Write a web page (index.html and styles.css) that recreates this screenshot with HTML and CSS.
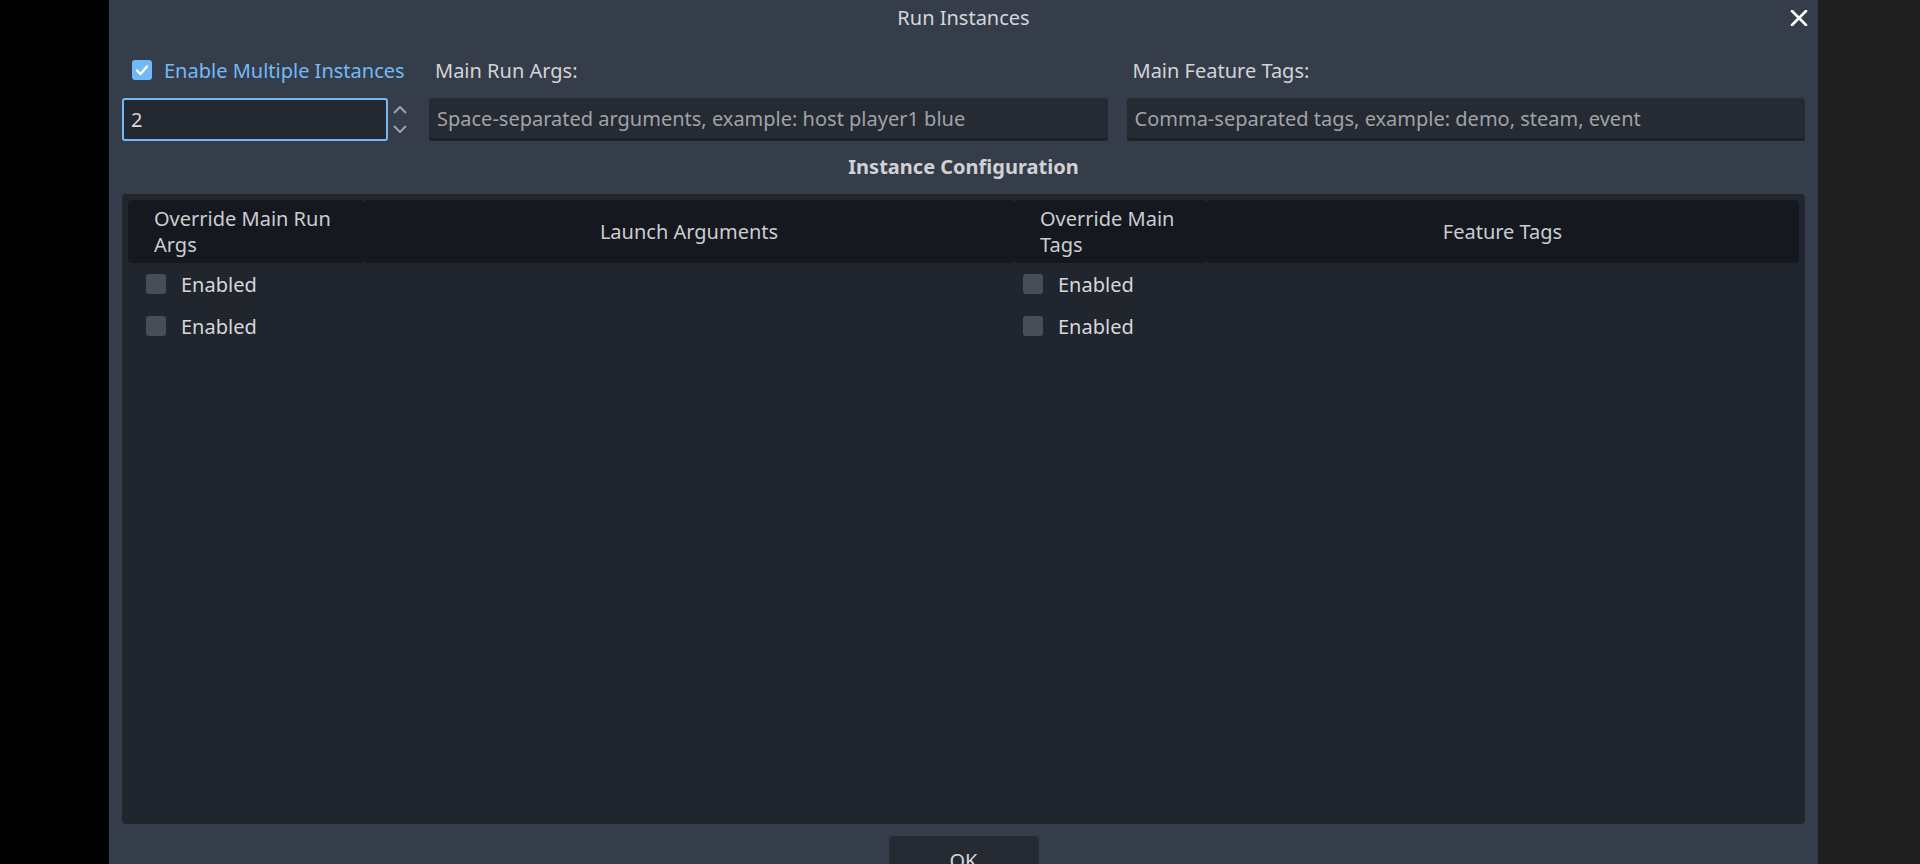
FILE: index.html
```html
<!DOCTYPE html>
<html lang="en">
<head>
  <meta charset="UTF-8" />
  <title>Run Instances</title>
  <link rel="stylesheet" href="styles.css">
</head>
<body>
  <div class="side-left"></div>

  <div class="dialog">
    <div class="titlebar">
      <span class="title">Run Instances</span>
      <span class="close">
        <svg width="18" height="16" viewBox="0 0 18 16"><path d="M2 1 L16 15 M16 1 L2 15" stroke="#fff" stroke-width="2.6" stroke-linecap="round"/></svg>
      </span>
    </div>

    <div class="content">
      <div class="top-grid">
        <label class="check-label">
          <span class="box checked">
            <svg width="14" height="12" viewBox="0 0 14 12"><path d="M2 6.5 L5.5 10 L12 2.5" fill="none" stroke="#fff" stroke-width="2.4" stroke-linecap="round" stroke-linejoin="round"/></svg>
          </span>
          Enable Multiple Instances
        </label>
        <div class="field-label">Main Run Args:</div>
        <div class="field-label">Main Feature Tags:</div>

        <div class="spinbox">
          <div class="spin-field">2</div>
          <div class="spin-arrows">
            <svg width="14" height="9" viewBox="0 0 14 9"><path d="M1.5 7.5 L7 2 L12.5 7.5" fill="none" stroke="#a3a6ac" stroke-width="1.8" stroke-linecap="round" stroke-linejoin="round"/></svg>
            <svg width="14" height="9" viewBox="0 0 14 9"><path d="M1.5 1.5 L7 7 L12.5 1.5" fill="none" stroke="#a3a6ac" stroke-width="1.8" stroke-linecap="round" stroke-linejoin="round"/></svg>
          </div>
        </div>
        <div class="line-edit">Space-separated arguments, example: host player1 blue</div>
        <div class="line-edit">Comma-separated tags, example: demo, steam, event</div>
      </div>

      <h2 class="section">Instance Configuration</h2>

      <div class="panel">
        <div class="tree-head">
          <div class="head-cell wrap first">Override Main Run Args</div>
          <div class="head-cell">Launch Arguments</div>
          <div class="head-cell wrap third">Override Main Tags</div>
          <div class="head-cell">Feature Tags</div>
        </div>

        <div class="tree-row">
          <div class="cell first"><span class="box"></span>Enabled</div>
          <div class="cell"></div>
          <div class="cell third"><span class="box"></span>Enabled</div>
          <div class="cell"></div>
        </div>
        <div class="tree-row">
          <div class="cell first"><span class="box"></span>Enabled</div>
          <div class="cell"></div>
          <div class="cell third"><span class="box"></span>Enabled</div>
          <div class="cell"></div>
        </div>
      </div>

      <div class="buttons">
        <button class="ok-btn">OK</button>
      </div>
    </div>
  </div>

  <div class="side-right"></div>
</body>
</html>
```

FILE: styles.css
```css
* {
  box-sizing: border-box;
}

body {
  margin: 0;
  height: 864px;
  overflow: hidden;
  display: flex;
  background: #000;
  font-family: 'Noto Sans', sans-serif;
  font-size: 20px;
  color: #d6d8db;
}

.side-left {
  width: 109px;
  background: #000;
}

.side-right {
  flex: 1;
  background: #1f1f1f;
}

.dialog {
  width: 1709px;
  background: #363d4a;
  display: flex;
  flex-direction: column;
}

.titlebar {
  position: relative;
  height: 35px;
  display: flex;
  align-items: center;
  justify-content: center;
}

.title {
  color: #d4d6d9;
  line-height: 35px;
}

.close {
  position: absolute;
  top: 10px;
  right: 10px;
  display: flex;
}

.content {
  padding: 21px 13px 0;
}

.top-grid {
  display: grid;
  grid-template-columns: 288px 1fr 1fr;
  grid-template-rows: 28px 43px;
  column-gap: 19px;
  row-gap: 14px;
}

.check-label {
  display: flex;
  align-items: center;
  gap: 12px;
  padding-left: 10px;
  color: #72baf7;
  white-space: nowrap;
}

.box {
  width: 20px;
  height: 20px;
  border-radius: 3px;
  background: #484d57;
  display: inline-flex;
  align-items: center;
  justify-content: center;
  flex-shrink: 0;
}

.box.checked {
  background: #70b9f6;
}

.field-label {
  display: flex;
  align-items: center;
  padding-left: 6px;
  color: #d2d4d7;
}

.spinbox {
  display: flex;
}

.spin-field {
  width: 266px;
  border: 2px solid #70b9f6;
  border-radius: 3px;
  background: #242931;
  padding-left: 7px;
  display: flex;
  align-items: center;
  color: #d6d8db;
}

.spin-arrows {
  flex: 1;
  display: flex;
  flex-direction: column;
  align-items: center;
  justify-content: center;
  gap: 11px;
  padding-left: 2px;
}

.line-edit {
  background: #252a33;
  border-radius: 3px;
  box-shadow: inset 0 -3px 0 #1e2229;
  padding: 0 8px 3px;
  display: flex;
  align-items: center;
  color: #a0a3a8;
  white-space: nowrap;
  overflow: hidden;
}

.section {
  margin: 12px 0 13px;
  line-height: 28px;
  font-size: 20px;
  font-weight: bold;
  text-align: center;
  color: #d0d2d5;
}

.panel {
  height: 630px;
  background: #21252d;
  border-radius: 4px;
  padding: 6px;
}

.tree-head,
.tree-row {
  display: grid;
  grid-template-columns: 236px 650px 192px 1fr;
}

.tree-head {
  height: 63px;
}

.head-cell {
  background: #15181f;
  border-radius: 4px;
  display: flex;
  align-items: center;
  justify-content: center;
  color: #cbcdd0;
  line-height: 26px;
}

.head-cell.wrap {
  justify-content: flex-start;
  padding-top: 1px;
}

.head-cell.first {
  padding-left: 26px;
  padding-right: 24px;
}

.head-cell.third {
  padding-left: 26px;
  padding-right: 24px;
}

.tree-row {
  height: 42px;
}

.cell {
  display: flex;
  align-items: center;
  gap: 15px;
  color: #d6d8db;
}

.cell.first {
  padding-left: 18px;
}

.cell.third {
  padding-left: 9px;
}

.buttons {
  display: flex;
  justify-content: center;
  margin-top: 12px;
}

.ok-btn {
  width: 150px;
  height: 48px;
  border: none;
  border-radius: 4px;
  background: #252a33;
  color: #d6d8db;
  font-family: 'Noto Sans', sans-serif;
  font-size: 20px;
}
```
